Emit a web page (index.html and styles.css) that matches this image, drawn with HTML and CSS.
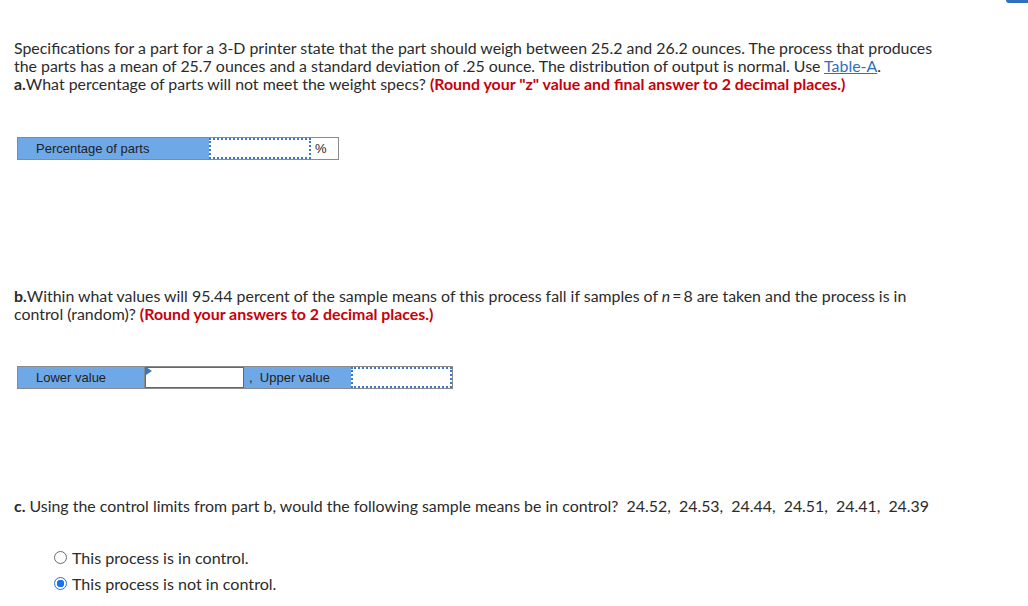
FILE: index.html
```html
<!DOCTYPE html>
<html>
<head>
<meta charset="utf-8">
<link rel="stylesheet" href="styles.css">
</head>
<body>
<div class="corner-tab"></div>
<main class="page">
  <p class="q q-a">Specifications for a part for a 3-D printer state that the part should weigh between 25.2 and 26.2 ounces. The process that produces the parts has a mean of 25.7 ounces and a standard deviation of .25 ounce. The distribution of output is normal. Use <a class="link" href="#">Table-A</a>.<br><b>a.</b>What percentage of parts will not meet the weight specs? <b class="red">(Round your "z" value and final answer to 2 decimal places.)</b></p>

  <div class="ans ans-a">
    <div class="cell label label-a">Percentage of parts</div>
    <div class="cell input dotted input-a"></div>
    <div class="cell unit">%</div>
  </div>

  <p class="q q-b"><b>b.</b>Within what values will 95.44 percent of the sample means of this process fall if samples of <i>n</i>&#8201;=&#8201;8 are taken and the process is in control (random)? <b class="red">(Round your answers to 2 decimal places.)</b></p>

  <div class="ans ans-b">
    <div class="cell label label-lower">Lower value</div>
    <div class="cell input solid input-lower"><span class="flag"></span></div>
    <div class="cell label label-upper">, &nbsp;Upper value</div>
    <div class="cell input dotted input-upper"></div>
  </div>

  <p class="q q-c"><b>c.</b> Using the control limits from part b, would the following sample means be in control?&nbsp; 24.52,&nbsp; 24.53,&nbsp; 24.44,&nbsp; 24.51,&nbsp; 24.41,&nbsp; 24.39</p>

  <div class="options">
    <label class="opt"><span class="radio"></span>This process is in control.</label>
    <label class="opt"><span class="radio checked"></span>This process is not in control.</label>
  </div>
</main>
</body>
</html>
```

FILE: styles.css
```css
html, body {
  margin: 0;
  padding: 0;
  background: #fff;
}
body {
  width: 1028px;
  height: 606px;
  position: relative;
  overflow: hidden;
  font-family: "Lato", "Open Sans", sans-serif;
  color: #2b2b2b;
}
.corner-tab {
  position: absolute;
  top: 0;
  right: 0;
  width: 22px;
  height: 3px;
  background: #2f6fc0;
  border-bottom-left-radius: 3px;
}
.page {
  padding: 39px 0 0 14px;
}
.q {
  margin: 0;
  font-size: 15.9px;
  line-height: 18px;
  width: 935px;
}
.q b { font-weight: 700; }
.red { color: #c8000a; }
.link { color: #2f6fc0; text-decoration: underline; }

.ans {
  display: flex;
  font-family: "Liberation Sans", Arial, sans-serif;
  font-size: 13px;
  color: #222;
  margin-left: 3px;
  height: 23px;
  box-sizing: border-box;
  border: 1px solid #8a8a8a;
  width: max-content;
}
.ans-a { margin-top: 44px; }
.ans-b { margin-top: 43px; }
.cell {
  box-sizing: border-box;
  height: 21px;
  display: flex;
  align-items: center;
}
.label {
  background: #6fa8e7;
  padding-left: 18px;
}
.label-a { width: 191px; }
.label-lower { width: 127px; border-right: 1px solid #8a8a8a; }
.label-upper { width: 107px; padding-left: 5px; }
.input { background: #fff; position: relative; }
.dotted { border: 2px dotted #3a78c6; }
.solid { border: 1px solid #3a6fb8; }
.input-a { width: 102px; }
.input-lower { width: 99px; }
.input-upper { width: 101px; }
.unit { width: 27px; padding-left: 4px; }
.flag {
  position: absolute;
  left: 0;
  top: -1px;
  width: 0;
  height: 0;
  border-top: 4px solid transparent;
  border-bottom: 4px solid transparent;
  border-left: 6px solid #3a78c6;
}

.q-b { margin-top: 127px; }
.q-c { margin-top: 108px; }

.options {
  margin-top: 33px;
  margin-left: 40px;
  display: flex;
  flex-direction: column;
  gap: 8px;
  font-size: 16.1px;
}
.opt {
  display: flex;
  align-items: center;
  height: 18px;
  gap: 5px;
}
.radio {
  width: 13px;
  height: 13px;
  box-sizing: border-box;
  border: 1px solid #6b6b6b;
  border-radius: 50%;
  background: #fff;
  display: inline-block;
}
.radio.checked {
  border: 1px solid #1a73e8;
  background: radial-gradient(circle, #1a73e8 0 3.5px, #fff 4px);
}
```
